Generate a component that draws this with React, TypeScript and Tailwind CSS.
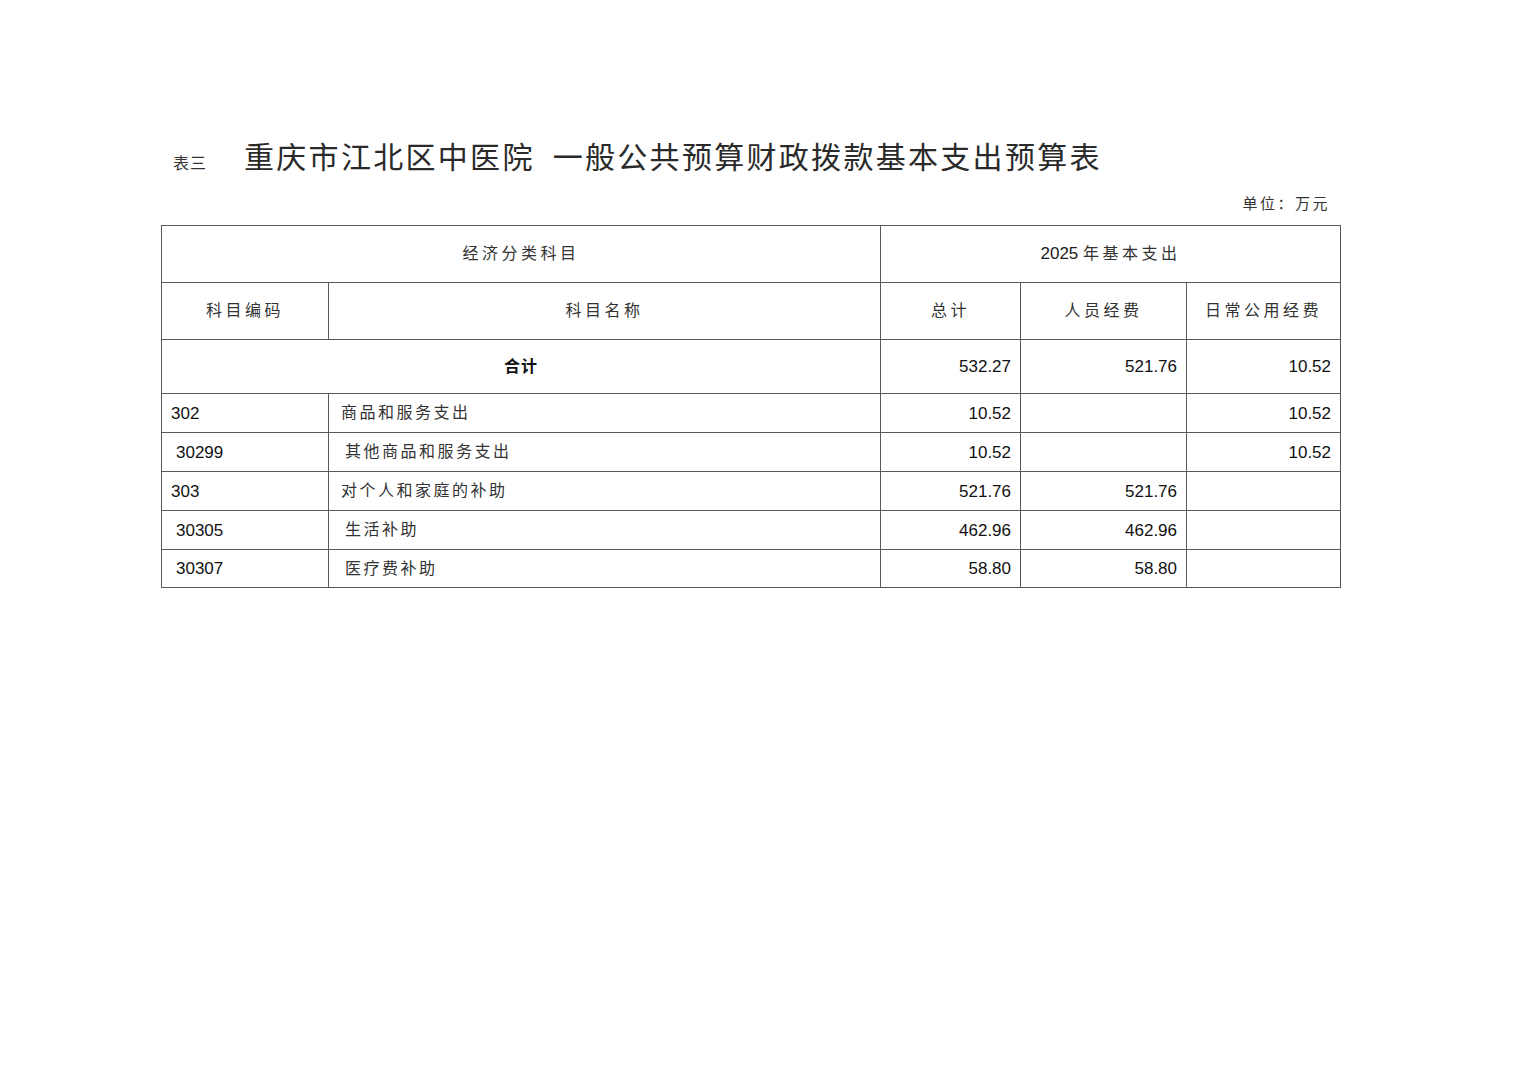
const cjk = { fontFamily: '"Liberation Sans", "Noto Sans CJK SC", sans-serif' };

type Row = { code: string; name: string; total: string; staff: string; daily: string; sub?: boolean };

const rows: Row[] = [
  { code: "302", name: "商品和服务支出", total: "10.52", staff: "", daily: "10.52" },
  { code: "30299", name: "其他商品和服务支出", total: "10.52", staff: "", daily: "10.52", sub: true },
  { code: "303", name: "对个人和家庭的补助", total: "521.76", staff: "521.76", daily: "" },
  { code: "30305", name: "生活补助", total: "462.96", staff: "462.96", daily: "", sub: true },
  { code: "30307", name: "医疗费补助", total: "58.80", staff: "58.80", daily: "", sub: true },
];

const cell = "border border-[#5a5a5a] p-0";

export default function App() {
  return (
    <div className="min-h-screen bg-white text-[#111]" style={cjk}>
      <div className="ml-[161px] w-[1179px] pt-[143px]">
        <div className="flex items-end">
          <span className="ml-[12px] mb-[1px] text-[16px] leading-none tracking-[1px] text-[#333]">表三</span>
          <h1 className="ml-[37px] text-[30px] font-normal leading-none tracking-[2.3px] text-[#2a2a2a]">
            重庆市江北区中医院<span className="ml-[18px]">一般公共预算财政拨款基本支出预算表</span>
          </h1>
        </div>
        <div className="mt-[23px] flex justify-end pr-[10px] text-[15px] leading-none tracking-[2.5px] text-[#333]">
          单位：万元
        </div>
        <table className="mt-[14px] w-[1179px] table-fixed border-collapse border border-[#444]">
          <colgroup>
            <col className="w-[167px]" />
            <col className="w-[552px]" />
            <col className="w-[140px]" />
            <col className="w-[166px]" />
            <col className="w-[154px]" />
          </colgroup>
          <tbody>
            <tr className="h-[57px]">
              <td colSpan={2} className={`${cell} text-center text-[16px] tracking-[3.5px] text-[#333]`}>
                经济分类科目
              </td>
              <td colSpan={3} className={`${cell} text-center text-[17px] text-[#1a1a1a]`}>
                2025 <span className="text-[16px] tracking-[3.5px] text-[#333]">年基本支出</span>
              </td>
            </tr>
            <tr className="h-[57px] text-center text-[16px] tracking-[3.5px] text-[#333]">
              <td className={cell}>科目编码</td>
              <td className={cell}>科目名称</td>
              <td className={cell}>总计</td>
              <td className={cell}>人员经费</td>
              <td className={cell}>日常公用经费</td>
            </tr>
            <tr className="h-[54px] text-[17px]">
              <td colSpan={2} className={`${cell} text-center font-bold text-[16px] tracking-[1px]`}>
                合计
              </td>
              <td className={`${cell} pr-[9px] pt-[1px] text-right`}>532.27</td>
              <td className={`${cell} pr-[9px] pt-[1px] text-right`}>521.76</td>
              <td className={`${cell} pr-[9px] pt-[1px] text-right`}>10.52</td>
            </tr>
            {rows.map((r, i) => (
              <tr key={r.code} className={`${i === rows.length - 1 ? "h-[38px]" : "h-[39px]"} text-[17px]`}>
                <td className={`${cell} pt-[1px] ${r.sub ? "pl-[14px]" : "pl-[9px]"}`}>{r.code}</td>
                <td
                  className={`${cell} text-[16px] tracking-[2.5px] text-[#333] ${r.sub ? "pl-[16px]" : "pl-[12px]"}`}
                >
                  {r.name}
                </td>
                <td className={`${cell} pr-[9px] pt-[1px] text-right`}>{r.total}</td>
                <td className={`${cell} pr-[9px] pt-[1px] text-right`}>{r.staff}</td>
                <td className={`${cell} pr-[9px] pt-[1px] text-right`}>{r.daily}</td>
              </tr>
            ))}
          </tbody>
        </table>
      </div>
    </div>
  );
}
